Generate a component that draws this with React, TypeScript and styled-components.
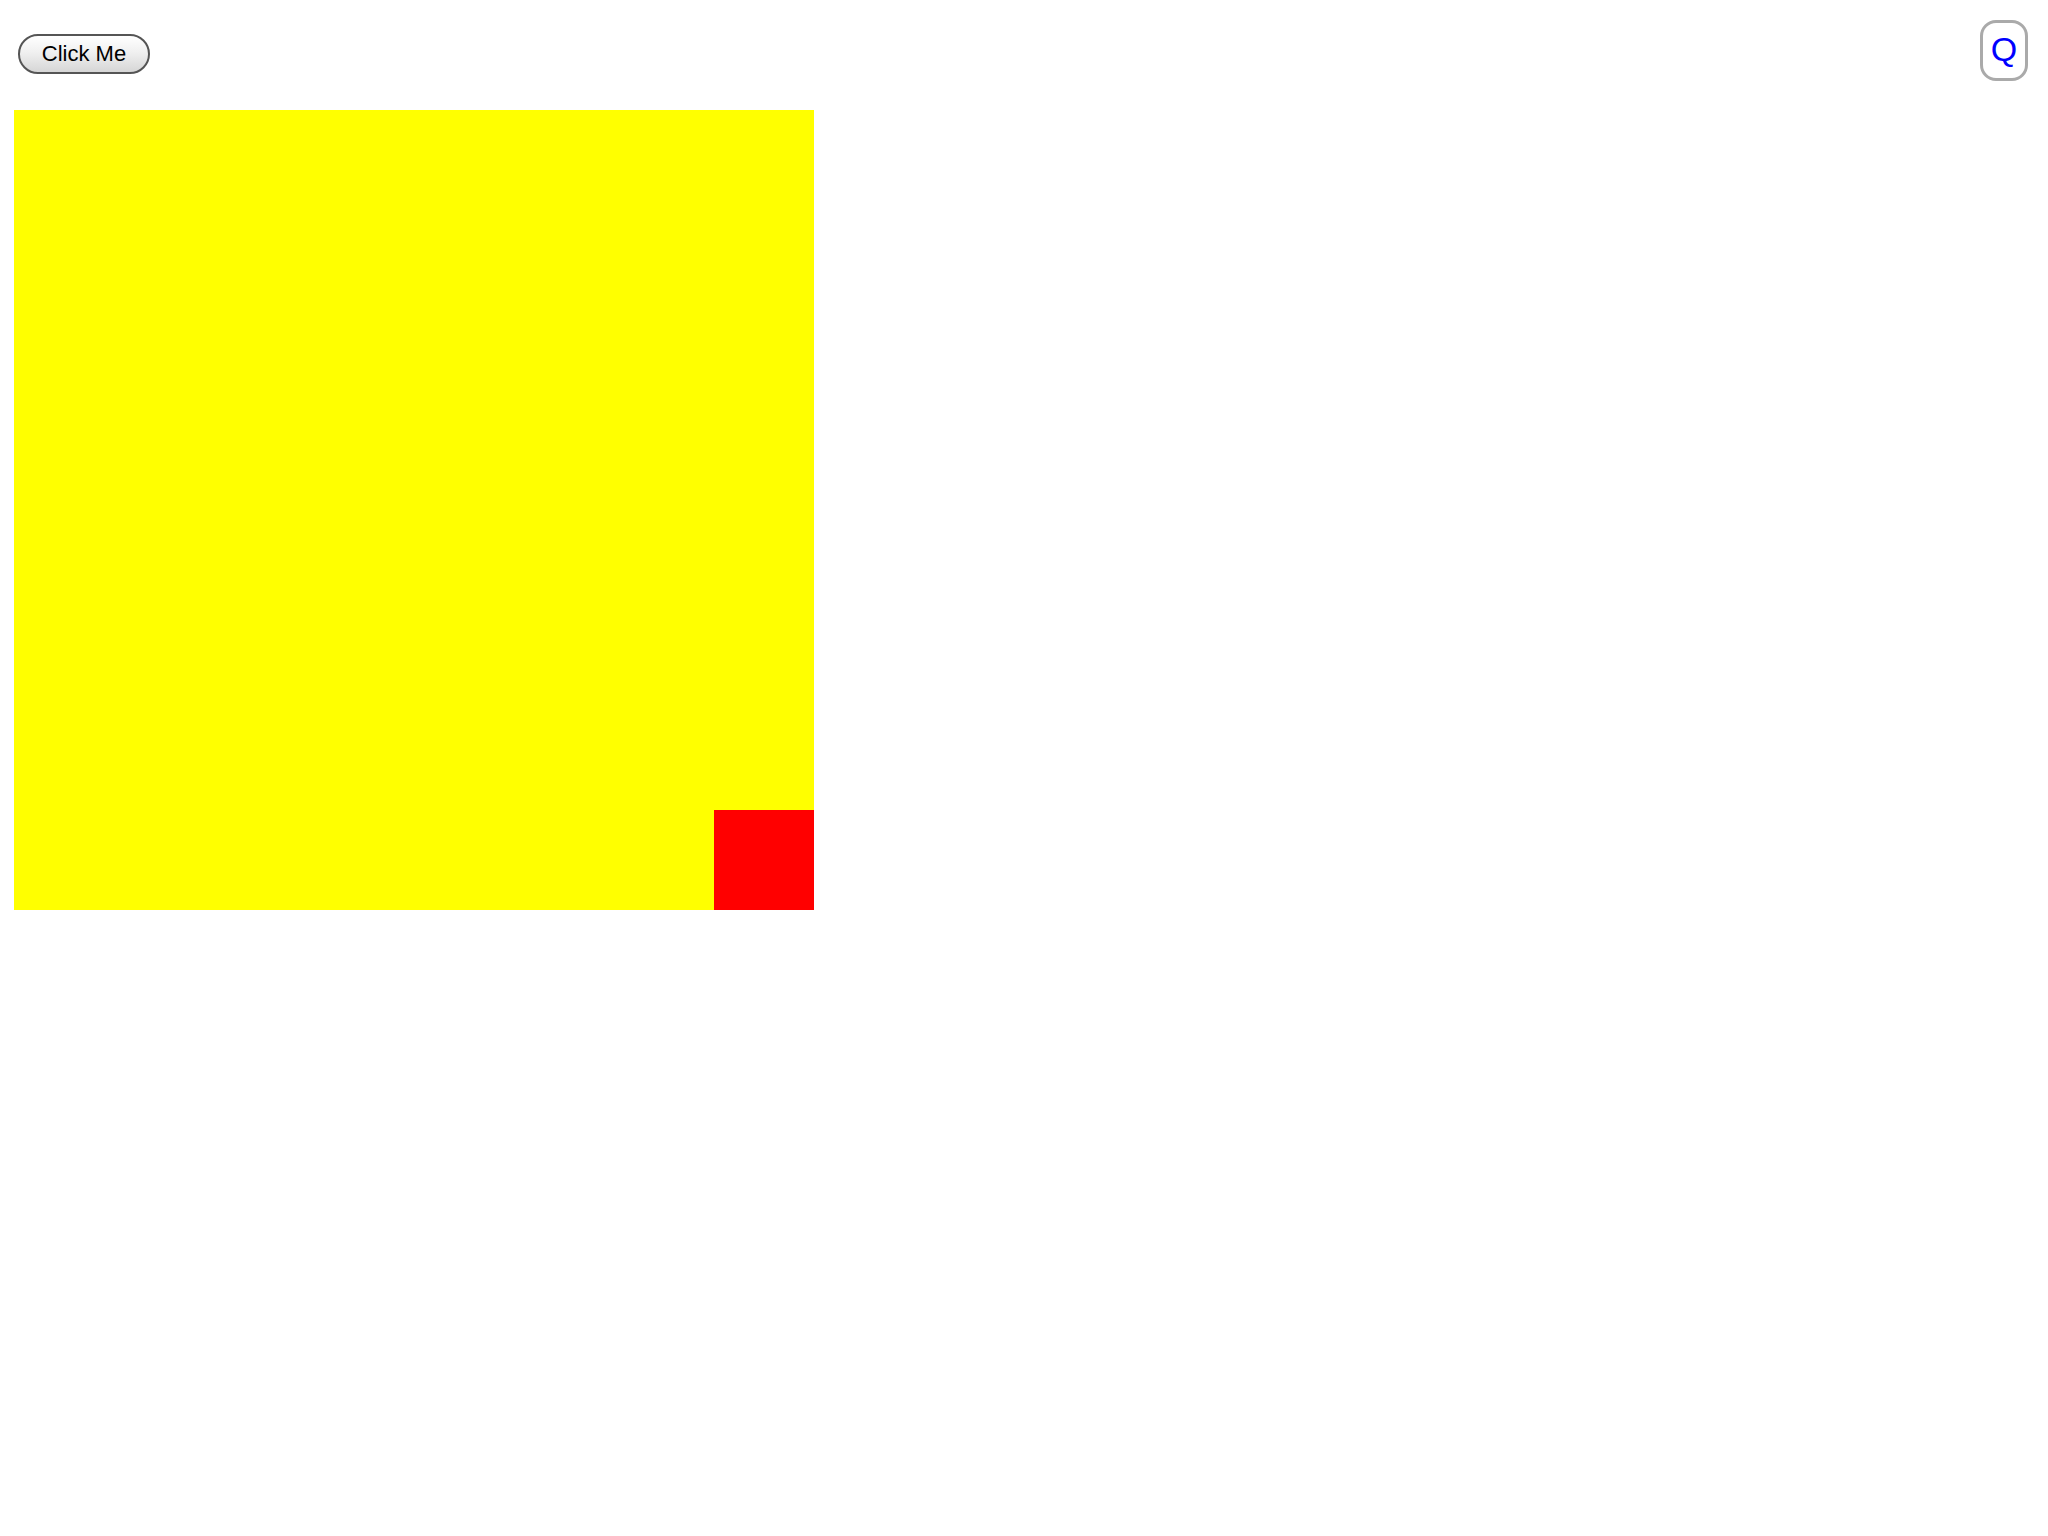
import styled, { createGlobalStyle } from 'styled-components'

const GlobalStyle = createGlobalStyle`
  body {
    margin: 0;
    background: #fff;
    font-family: 'Liberation Sans', Arial, sans-serif;
  }
`

const Page = styled.main`
  width: 2048px;
  min-height: 1536px;
`

const Toolbar = styled.header`
  display: flex;
  justify-content: space-between;
  align-items: flex-start;
  padding: 20px 20px 0 18px;
  height: 60px;
`

const PillButton = styled.button`
  margin-top: 14px;
  width: 132px;
  height: 40px;
  padding: 0;
  border: 2px solid #555;
  border-radius: 20px;
  background: linear-gradient(to bottom, #ffffff 0%, #f0f0f0 45%, #d6d6d6 100%);
  color: #000;
  font-family: 'Liberation Sans', Arial, sans-serif;
  font-size: 22px;
  line-height: 1;
  cursor: pointer;
`

const IconButton = styled.button`
  width: 48px;
  height: 61px;
  padding: 0 0 4px;
  border: 3px solid #aaa;
  border-radius: 16px;
  background: #fff;
  color: #0000ff;
  font-family: 'Liberation Sans', Arial, sans-serif;
  font-size: 34px;
  line-height: 1;
  cursor: pointer;
`

const Canvas = styled.section`
  margin: 30px 0 0 14px;
  width: 800px;
  height: 800px;
  background: #ffff00;
  display: flex;
  justify-content: flex-end;
  align-items: flex-end;
`

const Marker = styled.div`
  width: 100px;
  height: 100px;
  background: #ff0000;
`

export default function App() {
  return (
    <Page>
      <GlobalStyle />
      <Toolbar>
        <PillButton>Click Me</PillButton>
        <IconButton>Q</IconButton>
      </Toolbar>
      <Canvas>
        <Marker />
      </Canvas>
    </Page>
  )
}
